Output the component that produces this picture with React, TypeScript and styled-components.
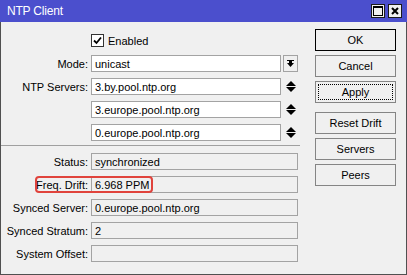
import React from "react";
import styled, { createGlobalStyle } from "styled-components";

const GlobalStyle = createGlobalStyle`
  html, body {
    margin: 0;
    padding: 0;
    background: #f0f0f0;
  }
  body {
    font-family: "Liberation Sans", Arial, sans-serif;
    font-size: 11px;
    color: #000;
  }
`;

const Window = styled.div`
  width: 407px;
  height: 275px;
  display: flex;
  flex-direction: column;
  box-sizing: border-box;
`;

const TitleBar = styled.div`
  height: 22px;
  flex: none;
  background: #4b4fcd;
  display: flex;
  align-items: center;
  padding: 0 5px 0 7px;
  box-sizing: border-box;
`;

const Title = styled.div`
  flex: 1;
  color: #fff;
  font-size: 12px;
  letter-spacing: -0.2px;
`;

const TitleButton = styled.div`
  width: 14px;
  height: 14px;
  margin-left: 3px;
  box-sizing: border-box;
  border: 1px solid #1a1a1a;
  background: #f0f0f0;
  display: flex;
  align-items: center;
  justify-content: center;
`;

const Body = styled.div`
  flex: 1;
  display: flex;
  border: 1px solid #505050;
  border-top: none;
  padding-top: 7px;
  background: #f0f0f0;
`;

const Form = styled.div`
  width: 299px;
  display: flex;
  flex-direction: column;
`;

const Row = styled.div`
  position: relative;
  height: 23px;
  display: flex;
  align-items: center;
`;

const Label = styled.div`
  width: 90px;
  padding-right: 3px;
  box-sizing: border-box;
  text-align: right;
  white-space: nowrap;
`;

const Field = styled.div<{ $readOnly?: boolean }>`
  width: ${(p) => (p.$readOnly ? "207px" : "190px")};
  height: 17px;
  box-sizing: border-box;
  border: 1px solid #a3a3a3;
  background: ${(p) => (p.$readOnly ? "#f0f0f0" : "#fff")};
  padding: 0 3px;
  display: flex;
  align-items: center;
  white-space: nowrap;
`;

const Side = styled.div<{ $boxed?: boolean }>`
  width: 15px;
  height: 17px;
  margin-left: 2px;
  box-sizing: border-box;
  border: ${(p) => (p.$boxed ? "1px solid #a3a3a3" : "none")};
  display: flex;
  align-items: center;
  justify-content: center;
`;

const CheckRow = styled.label`
  display: flex;
  align-items: center;
  gap: 4px;
  margin-left: 90px;
`;

const CheckBox = styled.div`
  width: 13px;
  height: 13px;
  box-sizing: border-box;
  border: 1px solid #333;
  background: #fff;
  display: flex;
  align-items: center;
  justify-content: center;
`;

const Separator = styled.div`
  height: 1px;
  background: #a0a0a0;
  margin: 1px 0 4px;
`;

const Highlight = styled.div`
  position: absolute;
  left: 34px;
  top: 3px;
  width: 118px;
  height: 17px;
  box-sizing: border-box;
  border: 2px solid #e0433c;
  border-radius: 4px;
  pointer-events: none;
`;

const Buttons = styled.div`
  width: 81px;
  margin-left: 15px;
  display: flex;
  flex-direction: column;
  gap: 4px;
`;

const Button = styled.button<{ $default?: boolean; $focused?: boolean; $spaced?: boolean }>`
  height: 22px;
  box-sizing: border-box;
  border: 1px solid ${(p) => (p.$default ? "#000" : "#858585")};
  background: #f0f0f0;
  font-family: inherit;
  font-size: 11px;
  color: #000;
  padding: 0;
  margin-bottom: ${(p) => (p.$spaced ? "5px" : "0")};
  outline: ${(p) => (p.$focused ? "1px dotted #000" : "none")};
  outline-offset: -4px;
`;

function Spinner() {
  return (
    <svg width="10" height="11" viewBox="0 0 10 11">
      <path d="M5 0 L10 5 L0 5 Z" fill="#000" />
      <path d="M0 6 L10 6 L5 11 Z" fill="#000" />
    </svg>
  );
}

function DropIcon() {
  return (
    <svg width="9" height="9" viewBox="0 0 9 9">
      <rect x="1" y="1" width="7" height="1" fill="#000" />
      <path d="M1 4 L8 4 L4.5 8 Z" fill="#000" />
      <rect x="3" y="2" width="3" height="2" fill="#000" />
    </svg>
  );
}

const servers = ["3.by.pool.ntp.org", "3.europe.pool.ntp.org", "0.europe.pool.ntp.org"];

const status = [
  { label: "Status:", value: "synchronized" },
  { label: "Freq. Drift:", value: "6.968 PPM", mark: true },
  { label: "Synced Server:", value: "0.europe.pool.ntp.org" },
  { label: "Synced Stratum:", value: "2" },
  { label: "System Offset:", value: "" },
];

export default function App() {
  return (
    <>
      <GlobalStyle />
      <Window>
        <TitleBar>
          <Title>NTP Client</Title>
          <TitleButton>
            <svg width="10" height="10" viewBox="0 0 10 10">
              <rect x="0.5" y="0.5" width="9" height="9" fill="none" stroke="#000" />
              <rect x="0" y="0" width="10" height="2" fill="#000" />
            </svg>
          </TitleButton>
          <TitleButton>
            <svg width="8" height="8" viewBox="0 0 8 8">
              <path d="M1 1 L7 7 M7 1 L1 7" stroke="#000" strokeWidth="2" />
            </svg>
          </TitleButton>
        </TitleBar>
        <Body>
          <Form>
            <Row>
              <CheckRow>
                <CheckBox>
                  <svg width="9" height="9" viewBox="0 0 9 9">
                    <path d="M1 4.5 L3.5 7 L8 1.5" fill="none" stroke="#000" strokeWidth="1.8" />
                  </svg>
                </CheckBox>
                Enabled
              </CheckRow>
            </Row>
            <Row>
              <Label>Mode:</Label>
              <Field>unicast</Field>
              <Side $boxed>
                <DropIcon />
              </Side>
            </Row>
            {servers.map((s, i) => (
              <Row key={s}>
                <Label>{i === 0 ? "NTP Servers:" : ""}</Label>
                <Field>{s}</Field>
                <Side>
                  <Spinner />
                </Side>
              </Row>
            ))}
            <Separator />
            {status.map((s) => (
              <Row key={s.label}>
                <Label>{s.label}</Label>
                <Field $readOnly>{s.value}</Field>
                {s.mark && <Highlight />}
              </Row>
            ))}
          </Form>
          <Buttons>
            <Button $default>OK</Button>
            <Button>Cancel</Button>
            <Button $focused $spaced>Apply</Button>
            <Button>Reset Drift</Button>
            <Button>Servers</Button>
            <Button>Peers</Button>
          </Buttons>
        </Body>
      </Window>
    </>
  );
}
